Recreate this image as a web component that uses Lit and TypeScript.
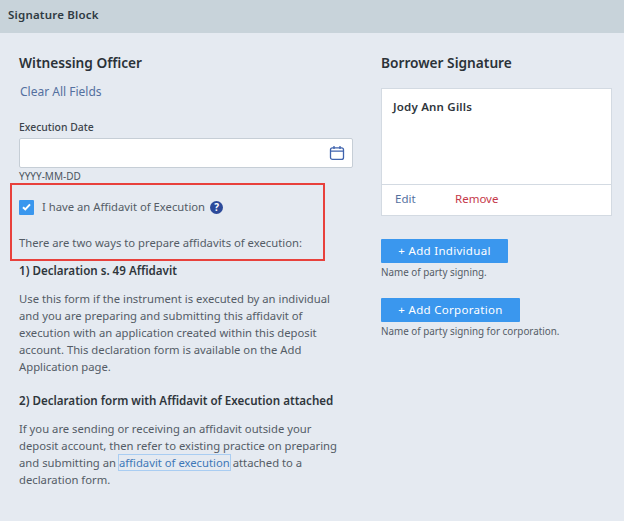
import { LitElement, html, css } from "lit";
import { customElement } from "lit/decorators.js";

@customElement("app-root")
export class AppRoot extends LitElement {
  static styles = css`
    :host { display: block; width: 624px; height: 521px; overflow: hidden; background: #e5eaf1; font-family: "Noto Sans", sans-serif; font-size: 11.27px; color: #545c66; }
    .bar { height: 33px; box-sizing: border-box; background: #c8d3da; padding: 7px 8px 0; font-size: 11.5px; line-height: 16px; font-weight: 600; color: #2f3a42; letter-spacing: 0.2px; }
    .cols { display: grid; grid-template-columns: 334px 231px; column-gap: 28px; padding: 21px 0 0 19px; }
    h2 { margin: 0; font-size: 13.7px; line-height: 18px; font-weight: 600; color: #2b3238; }
    .clear { margin: 12px 0 0 1px; line-height: 16px; color: #54709f; font-size: 12px; }
    .label { margin-top: 20px; line-height: 14px; font-size: 10.4px; font-weight: 500; color: #3c444c; }
    .input { margin-top: 4px; height: 30px; box-sizing: border-box; background: #fff; border: 1px solid #c6ced6; border-radius: 2px; display: flex; align-items: center; justify-content: flex-end; padding-right: 7px; }
    .input svg { display: block; }
    .hint { margin-top: 1px; line-height: 14px; font-size: 10px; color: #4c5560; }
    .callout { margin: 0 0 0 -9px; width: 315px; height: 78px; box-sizing: border-box; border: 2px solid #e8413c; padding: 0 0 0 7px; }
    .check { display: flex; align-items: center; padding-top: 14px; height: 16px; }
    .box { width: 15px; height: 15px; background: #3a97ee; border-radius: 1px; display: flex; align-items: center; justify-content: center; margin-right: 8px; }
    .check span { line-height: 16px; }
    .q { margin-left: 5px; width: 13px; height: 13px; border-radius: 50%; background: #2c4a9a; color: #fff; font-size: 10px; font-weight: 700; line-height: 13px; text-align: center; }
    .callout p { margin: 20px 0 0; line-height: 16px; }
    h3 { margin: 2px 0 0; font-size: 11.6px; line-height: 16px; font-weight: 600; color: #2f363c; }
    .para { margin: 11px 0 0; line-height: 17px; }
    h3.second { margin-top: 18px; }
    .para.last { margin-top: 11px; }
    .link { color: #3f78b8; border: 1px solid #a9cdf2; margin: 0 -1px; }
    .card { margin-top: 16px; width: 231px; background: #fff; border: 1px solid #d3dae2; box-sizing: border-box; }
    .name { height: 95px; box-sizing: border-box; padding: 10px 11px 0; font-size: 11.5px; letter-spacing: 0.2px; line-height: 16px; font-weight: 600; color: #2f363c; }
    .acts { border-top: 1px solid #d3dae2; height: 31px; box-sizing: border-box; padding: 6px 13px 0; display: flex; line-height: 16px; font-size: 11.5px; }
    .edit { color: #54709f; width: 60px; }
    .remove { color: #c5394a; }
    .btn { display: block; margin-top: 19px; height: 24px; background: #3a97ee; color: #fff; font-size: 11.5px; font-weight: 400; line-height: 24px; text-align: center; letter-spacing: 0.3px; border-radius: 1px; }
    .b1 { width: 127px; margin-top: 23px; }
    .b2 { width: 139px; }
    .sub { margin-top: 2px; font-size: 9.85px; line-height: 14px; }
  `;

  render() {
    return html`
      <div class="bar">Signature Block</div>
      <div class="cols">
        <div>
          <h2>Witnessing Officer</h2>
          <div class="clear">Clear All Fields</div>
          <div class="label">Execution Date</div>
          <div class="input">
            <svg width="16" height="16" viewBox="0 0 16 16" fill="none" stroke="#3f63ad" stroke-width="1.3">
              <rect x="1.5" y="2.8" width="13" height="11.6" rx="2"></rect>
              <path d="M1.5 6.2h13M5 1v3M11 1v3"></path>
            </svg>
          </div>
          <div class="hint">YYYY-MM-DD</div>
          <div class="callout">
            <div class="check">
              <div class="box">
                <svg width="9" height="8" viewBox="0 0 9 8" fill="none" stroke="#fff" stroke-width="2"><path d="M1 4.2l2.3 2.2L8 1.4"></path></svg>
              </div>
              <span>I have an Affidavit of Execution</span>
              <div class="q">?</div>
            </div>
            <p>There are two ways to prepare affidavits of execution:</p>
          </div>
          <h3>1) Declaration s. 49 Affidavit</h3>
          <p class="para">Use this form if the instrument is executed by an individual<br>and you are preparing and submitting this affidavit of<br>execution with an application created within this deposit<br>account. This declaration form is available on the Add<br>Application page.</p>
          <h3 class="second">2) Declaration form with Affidavit of Execution attached</h3>
          <p class="para last">If you are sending or receiving an affidavit outside your<br>deposit account, then refer to existing practice on preparing<br>and submitting an <span class="link">affidavit of execution</span> attached to a<br>declaration form.</p>
        </div>
        <div>
          <h2>Borrower Signature</h2>
          <div class="card">
            <div class="name">Jody Ann Gills</div>
            <div class="acts"><span class="edit">Edit</span><span class="remove">Remove</span></div>
          </div>
          <div class="btn b1">+ Add Individual</div>
          <div class="sub">Name of party signing.</div>
          <div class="btn b2">+ Add Corporation</div>
          <div class="sub">Name of party signing for corporation.</div>
        </div>
      </div>
    `;
  }
}
